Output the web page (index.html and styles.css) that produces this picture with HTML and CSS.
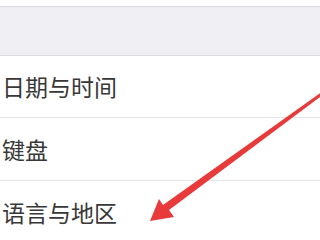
FILE: index.html
```
<!DOCTYPE html>
<html><head><meta charset="utf-8"><link rel="stylesheet" href="styles.css"></head>
<body>
<div class="screen">
  <div class="top"></div>
  <div class="band"></div>
  <div class="list">
    <div class="row"><span class="label">日期与时间</span></div>
    <div class="row"><span class="label">键盘</span></div>
    <div class="row last"><span class="label">语言与地区</span></div>
  </div>
  <svg class="arrow" width="320" height="240" viewBox="0 0 320 240">
    <path d="M321 92.5 L322 95.5 L169 210 L174 217 L150 221 L159 199 L163 205 Z" fill="#e83a3a"/>
  </svg>
</div>
</body></html>
```
FILE: styles.css
```
html,body{margin:0;padding:0;background:#fff;}
.screen{position:relative;width:320px;height:240px;overflow:hidden;font-family:"Noto Sans CJK SC","Noto Sans",sans-serif;}
.top{height:6px;background:#fff;border-bottom:1px solid #d8d8dc;}
.band{height:48px;background:#efeff4;border-bottom:1px solid #dcdce0;}
.list{background:#fff;}
.row{height:62px;border-bottom:1px solid #e6e6e8;display:flex;align-items:center;padding-left:2px;}
.row:first-child{height:61px;}
.row.last{border-bottom:none;}
.label{font-size:23px;color:#383838;letter-spacing:0;line-height:1;}
.arrow{position:absolute;left:0;top:0;}
```
